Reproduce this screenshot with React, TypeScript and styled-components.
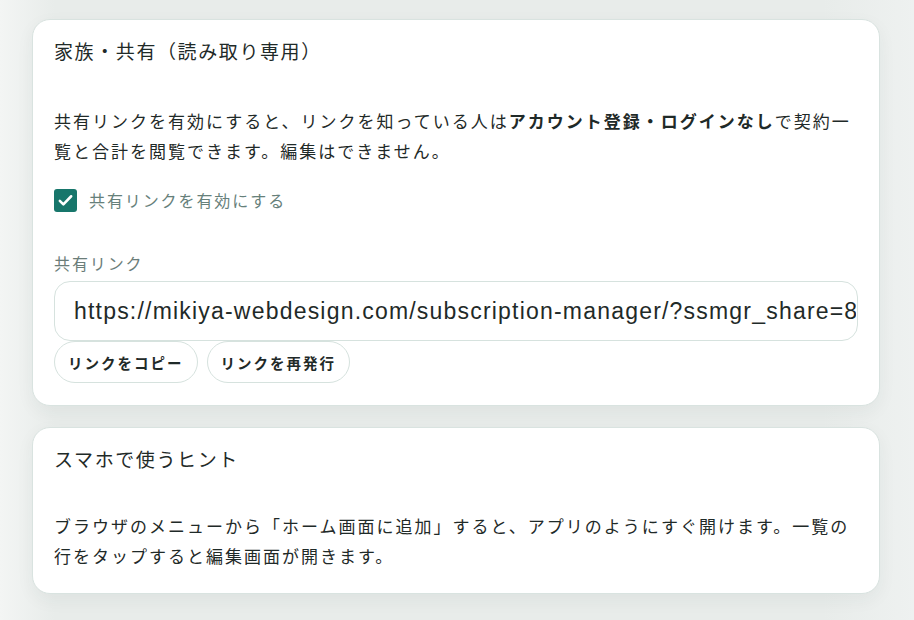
import React from 'react'
import styled, { createGlobalStyle } from 'styled-components'

const GlobalStyle = createGlobalStyle`
  html, body {
    margin: 0;
    padding: 0;
  }

  body {
    min-height: 620px;
    background: linear-gradient(90deg, #f3f5f4 0%, #e8ecea 6%, #e8ecea 90%, #eef1f0 100%);
    font-family: "Noto Sans CJK JP", "Noto Sans", sans-serif;
    color: #1f2a28;
  }
`

const Page = styled.main`
  display: flex;
  flex-direction: column;
  gap: 21px;
  padding: 19px 34px 0 32px;
`

const Card = styled.section`
  background: #fff;
  border: 1px solid #d9e3e0;
  border-radius: 18px;
  box-shadow: 0 6px 18px rgba(40, 60, 55, 0.05);
  padding: 17px 21px 22px;
`

const Title = styled.h2`
  margin: 0;
  font-size: 19px;
  font-weight: 400;
  letter-spacing: 1.6px;
  line-height: 28px;
  color: #1f2a28;
`

const Text = styled.p<{ $top: number }>`
  margin: ${(p) => p.$top}px 0 0;
  font-size: 17px;
  letter-spacing: 2px;
  line-height: 30px;
  color: #1f2a28;

  b {
    font-weight: 700;
  }
`

const CheckRow = styled.label`
  display: flex;
  align-items: center;
  gap: 12px;
  margin-top: 22px;
  font-size: 16px;
  letter-spacing: 1.9px;
  color: #66807a;
`

const CheckBox = styled.span`
  width: 23px;
  height: 23px;
  border-radius: 3px;
  background: #17766b;
  display: flex;
  align-items: center;
  justify-content: center;
`

const FieldLabel = styled.div`
  margin-top: 40px;
  font-size: 16px;
  letter-spacing: 1.9px;
  line-height: 22px;
  color: #6b7d79;
`

const LinkInput = styled.input`
  display: block;
  box-sizing: border-box;
  width: 100%;
  height: 60px;
  margin-top: 7px;
  padding: 0 1px 0 19px;
  border: 1px solid #d6e2de;
  border-radius: 16px;
  background: #fff;
  font-family: "Liberation Sans", "Noto Sans", sans-serif;
  font-size: 23px;
  letter-spacing: 1.2px;
  color: #1f2a28;
  outline: none;
`

const Actions = styled.div`
  display: flex;
  gap: 9px;
  margin-top: 0;
`

const PillButton = styled.button`
  height: 42px;
  padding: 0 13px;
  border: 1px solid #d6e2de;
  border-radius: 21px;
  background: #fff;
  font-family: "Noto Sans CJK JP", sans-serif;
  font-size: 14.5px;
  letter-spacing: 2px;
  font-weight: 700;
  color: #1f2a28;
`

const Check = () => (
  <svg width="17" height="17" viewBox="0 0 24 24" fill="none">
    <path
      d="M4 12.5l5 5L20 6"
      stroke="#fff"
      strokeWidth="3.6"
      strokeLinecap="round"
      strokeLinejoin="round"
    />
  </svg>
)

const shareUrl =
  'https://mikiya-webdesign.com/subscription-manager/?ssmgr_share=8f3c2a91d47e'

export default function App() {
  return (
    <Page>
      <GlobalStyle />
      <Card>
        <Title>家族・共有（読み取り専用）</Title>
        <Text $top={41}>
          共有リンクを有効にすると、リンクを知っている人は
          <b>アカウント登録・ログインなし</b>で契約一覧と合計を閲覧できます。編集はできません。
        </Text>
        <CheckRow>
          <CheckBox>
            <Check />
          </CheckBox>
          共有リンクを有効にする
        </CheckRow>
        <FieldLabel>共有リンク</FieldLabel>
        <LinkInput readOnly value={shareUrl} />
        <Actions>
          <PillButton>リンクをコピー</PillButton>
          <PillButton>リンクを再発行</PillButton>
        </Actions>
      </Card>
      <Card>
        <Title>スマホで使うヒント</Title>
        <Text $top={38}>
          ブラウザのメニューから「ホーム画面に追加」すると、アプリのようにすぐ開けます。一覧の行をタップすると編集画面が開きます。
        </Text>
      </Card>
    </Page>
  )
}
